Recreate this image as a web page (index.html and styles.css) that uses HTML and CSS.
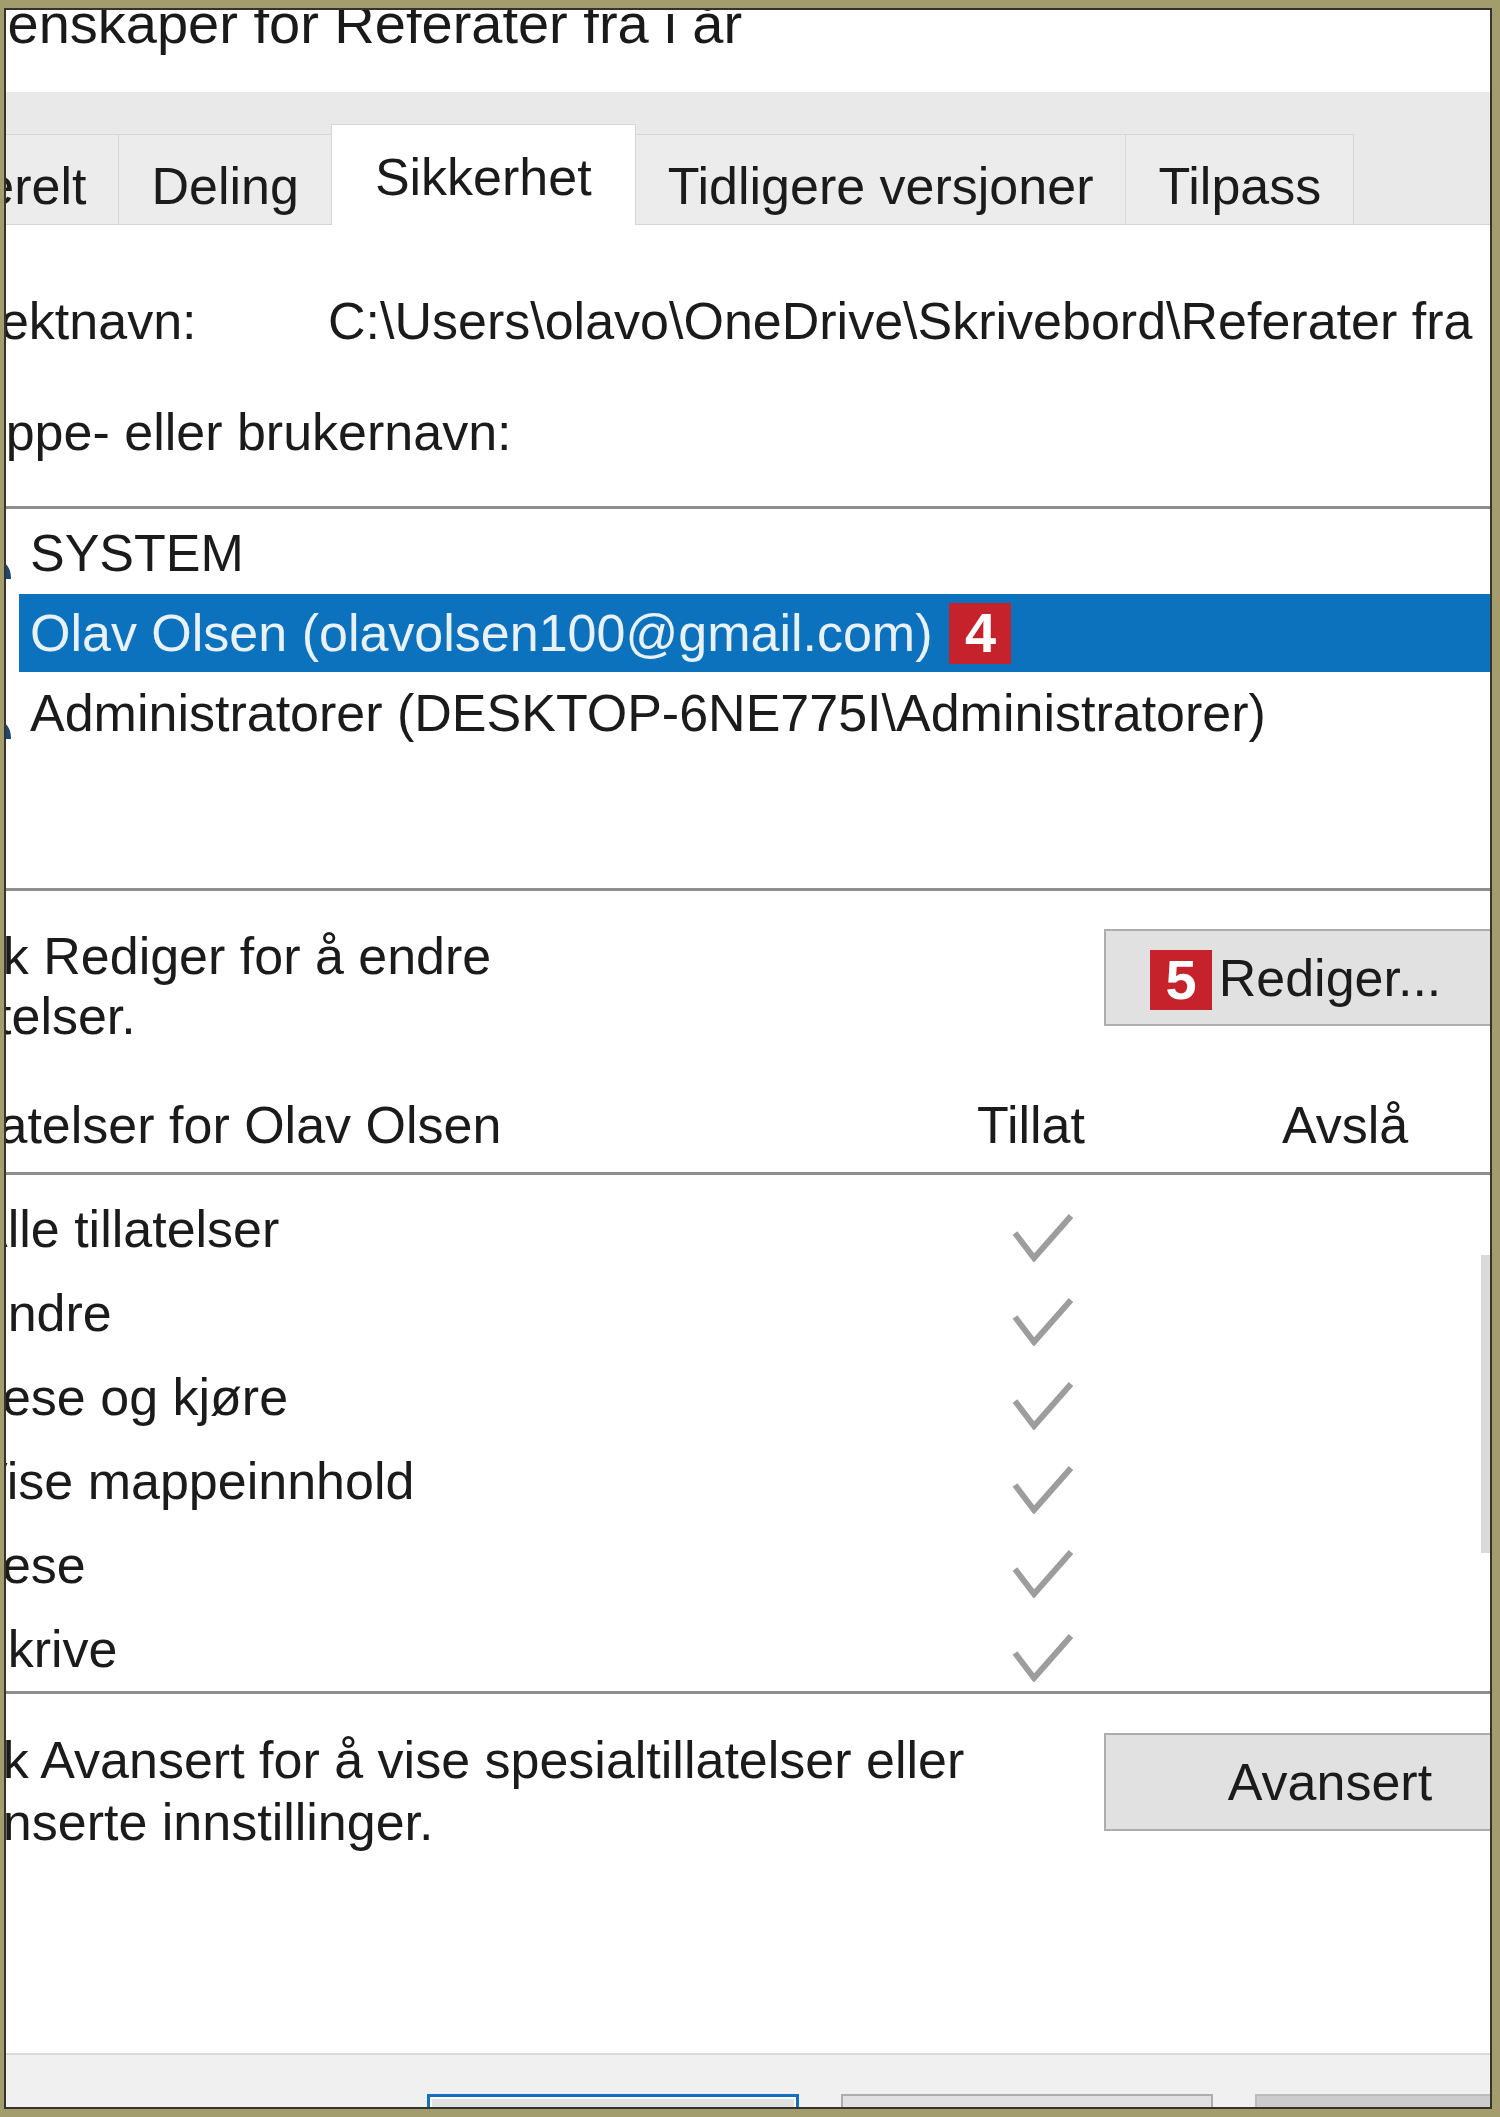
FILE: index.html
```html
<!DOCTYPE html>
<html lang="no">
<head>
<meta charset="utf-8">
<title>Egenskaper for Referater fra i år</title>
<link rel="stylesheet" href="styles.css">
</head>
<body>
<div class="frame">
  <div class="dialog">
    <div class="titlebar"><span class="title">Egenskaper for Referater fra i år</span></div>
    <div class="tabband">
      <div class="tab">Generelt</div>
      <div class="tab">Deling</div>
      <div class="tab active">Sikkerhet</div>
      <div class="tab">Tidligere versjoner</div>
      <div class="tab">Tilpass</div>
    </div>
    <div class="body">
      <div class="objrow"><span class="objlabel">Objektnavn:</span><span class="objpath">C:\Users\olavo\OneDrive\Skrivebord\Referater fra i år</span></div>
      <div class="grouplabel">Gruppe- eller brukernavn:</div>
      <div class="listbox">
        <div class="lrow">
          <svg class="uicon" viewBox="0 0 60 60" width="60" height="60"><circle cx="22" cy="18" r="11" fill="#5b8cc4"/><path d="M4 50 C4 36 12 31 22 31 C32 31 40 36 40 50 Z" fill="#3e6fa8"/><circle cx="40" cy="24" r="10" fill="#3a6aa0"/><path d="M24 56 C24 42 32 37 41 37 C50 37 58 42 58 56 Z" fill="#1f4673"/></svg>
          <span class="lname">SYSTEM</span>
        </div>
        <div class="lrow sel">
          <svg class="uicon" viewBox="0 0 60 60" width="60" height="60"><circle cx="30" cy="20" r="12" fill="#5b8cc4"/><path d="M12 54 C12 39 20 34 30 34 C40 34 48 39 48 54 Z" fill="#3e6fa8"/></svg>
          <span class="lname">Olav Olsen (olavolsen100@gmail.com)<span class="badge">4</span></span>
        </div>
        <div class="lrow">
          <svg class="uicon" viewBox="0 0 60 60" width="60" height="60"><circle cx="22" cy="18" r="11" fill="#5b8cc4"/><path d="M4 50 C4 36 12 31 22 31 C32 31 40 36 40 50 Z" fill="#3e6fa8"/><circle cx="40" cy="24" r="10" fill="#3a6aa0"/><path d="M24 56 C24 42 32 37 41 37 C50 37 58 42 58 56 Z" fill="#1f4673"/></svg>
          <span class="lname">Administratorer (DESKTOP-6NE775I\Administratorer)</span>
        </div>
      </div>

      <div class="action edit">
        <p class="hint">Klikk Rediger for å endre<br>tillatelser.</p>
        <button class="btn btn-edit" type="button"><span class="badge badge-btn">5</span>Rediger...</button>
      </div>

      <div class="header">
        <span class="h-label">Tillatelser for Olav Olsen</span>
        <span class="h-allow">Tillat</span>
        <span class="h-deny">Avslå</span>
      </div>

      <div class="permbox">
        <div class="perms">
          <div class="prow"><span class="plabel">Alle tillatelser</span><span class="pcheck"><svg class="chk" viewBox="0 0 62 50" width="62" height="50"><path d="M3 21 L22 46 L59 4" fill="none" stroke="#9d9d9d" stroke-width="6"/></svg></span></div>
          <div class="prow"><span class="plabel">Endre</span><span class="pcheck"><svg class="chk" viewBox="0 0 62 50" width="62" height="50"><path d="M3 21 L22 46 L59 4" fill="none" stroke="#9d9d9d" stroke-width="6"/></svg></span></div>
          <div class="prow"><span class="plabel">Lese og kjøre</span><span class="pcheck"><svg class="chk" viewBox="0 0 62 50" width="62" height="50"><path d="M3 21 L22 46 L59 4" fill="none" stroke="#9d9d9d" stroke-width="6"/></svg></span></div>
          <div class="prow"><span class="plabel">Vise mappeinnhold</span><span class="pcheck"><svg class="chk" viewBox="0 0 62 50" width="62" height="50"><path d="M3 21 L22 46 L59 4" fill="none" stroke="#9d9d9d" stroke-width="6"/></svg></span></div>
          <div class="prow"><span class="plabel">Lese</span><span class="pcheck"><svg class="chk" viewBox="0 0 62 50" width="62" height="50"><path d="M3 21 L22 46 L59 4" fill="none" stroke="#9d9d9d" stroke-width="6"/></svg></span></div>
          <div class="prow"><span class="plabel">Skrive</span><span class="pcheck"><svg class="chk" viewBox="0 0 62 50" width="62" height="50"><path d="M3 21 L22 46 L59 4" fill="none" stroke="#9d9d9d" stroke-width="6"/></svg></span></div>
        </div>
        <div class="scroll"><div class="thumb"></div></div>
      </div>

      <div class="action adv">
        <p class="hint hint-adv">Klikk Avansert for å vise spesialtillatelser eller<br>avanserte innstillinger.</p>
        <button class="btn btn-adv" type="button">Avansert</button>
      </div>
    </div>

    <div class="band">
      <button class="fbtn ok" type="button">OK</button>
      <button class="fbtn" type="button">Avbryt</button>
      <button class="fbtn dis" type="button">Bruk</button>
    </div>
  </div>
</div>
</body>
</html>
```

FILE: styles.css
```css
* { box-sizing: border-box; }
html, body { margin: 0; padding: 0; }
body {
  width: 1500px;
  height: 2117px;
  overflow: hidden;
  background: #a39c6c;
  font-family: "Liberation Sans", Arial, sans-serif;
  color: #1b1b1b;
}
.frame {
  margin: 8px 8px 8px 4px;
  width: 1488px;
  height: 2101px;
  border: 2px solid #34332c;
  background: #fff;
  overflow: hidden;
}
.dialog {
  margin-left: -166px;
  width: 1760px;
}
.titlebar {
  height: 82px;
  overflow: hidden;
  padding-left: 99px;
  background: #fff;
}
.title {
  display: block;
  font-size: 56px;
  line-height: 56px;
  margin-top: -14px;
  white-space: nowrap;
  color: #1a1a1a;
}
.tabband {
  height: 133px;
  background: #e9e9e9;
  border-bottom: 1px solid #d5d5d5;
  display: flex;
  align-items: flex-end;
  padding-left: 14px;
}
.tab {
  font-size: 52px;
  line-height: 60px;
  height: 90px;
  padding: 21px 32px 0;
  background: #ececec;
  border: 1px solid #d6d6d6;
  border-bottom: none;
  white-space: nowrap;
  color: #1b1b1b;
}
.tab + .tab { margin-left: -1px; }
.tab.active {
  height: 101px;
  margin-bottom: -1px;
  padding: 22px 43px 0;
  background: #fff;
  position: relative;
}
.body {
  padding-left: 79px;
  font-size: 52px;
  line-height: 60px;
}
.objrow {
  margin-top: 66px;
  display: flex;
  white-space: nowrap;
}
.objlabel { width: 409px; flex-shrink: 0; }
.grouplabel { margin-top: 51px; white-space: nowrap; }
.listbox {
  margin-top: 44px;
  width: 1627px;
  height: 385px;
  border: 3px solid #8f8f8f;
  padding-top: 4px;
}
.lrow {
  height: 80px;
  display: flex;
  align-items: center;
  gap: 6px;
  padding-left: 31px;
}
.uicon { flex-shrink: 0; }
.lname {
  flex: 1;
  height: 78px;
  display: flex;
  align-items: center;
  padding-left: 11px;
  white-space: nowrap;
}
.lrow.sel .lname {
  background: #0c72bd;
  color: #e8f0f8;
}
.badge {
  display: inline-flex;
  align-items: center;
  justify-content: center;
  width: 62px;
  height: 61px;
  background: #c5222b;
  color: #fff;
  font-weight: bold;
  font-size: 56px;
  line-height: 1;
}
.lname .badge { margin-left: 17px; }
.action {
  display: flex;
  align-items: flex-start;
}
.action.edit { margin-top: 35px; }
.action.adv { margin-top: 35px; }
.hint {
  margin: 0;
  width: 1185px;
  flex-shrink: 0;
  white-space: nowrap;
}
.hint-adv { line-height: 62px; }
.btn {
  position: relative;
  flex-shrink: 0;
  width: 452px;
  padding: 0;
  border: 2px solid #adadad;
  background: #e1e1e1;
  font-family: inherit;
  font-size: 52px;
  color: #1b1b1b;
  text-align: center;
}
.btn-edit { margin-top: 3px; height: 97px; }
.btn-adv { margin-top: 4px; height: 98px; }
.badge-btn {
  position: absolute;
  left: 44px;
  top: 19px;
  height: 60px;
}
.header {
  margin-top: 49px;
  padding-left: 15px;
  display: flex;
  white-space: nowrap;
}
.h-label { width: 997px; flex-shrink: 0; }
.h-allow { width: 200px; text-align: center; flex-shrink: 0; }
.h-deny { width: 200px; margin-left: 114px; text-align: center; flex-shrink: 0; }
.permbox {
  margin-top: 17px;
  width: 1625px;
  border: 3px solid #8f8f8f;
  display: flex;
}
.perms {
  flex: 1;
  padding-top: 12px;
}
.prow {
  height: 84px;
  display: grid;
  grid-template-columns: 1014px 214px;
  align-items: center;
}
.plabel { padding-left: 51px; white-space: nowrap; }
.pcheck { display: flex; justify-content: center; padding-top: 16px; }
.chk { display: block; }
.scroll {
  width: 60px;
  flex-shrink: 0;
  padding-top: 80px;
}
.thumb { height: 298px; background: #dadada; }
.band {
  margin-top: 200px;
  height: 200px;
  background: #f0f0f0;
  border-top: 2px solid #dadada;
  padding: 39px 0 0 587px;
  display: flex;
  gap: 42px;
}
.fbtn {
  width: 372px;
  height: 98px;
  flex-shrink: 0;
  border: 2px solid #adadad;
  background: #e1e1e1;
  font-family: inherit;
  font-size: 52px;
  color: #1b1b1b;
}
.fbtn.ok {
  border: 3px solid #1371c3;
  box-shadow: inset 0 0 0 2px #fff;
}
.fbtn.dis {
  border-color: #bdbdbd;
  background: #cccccc;
  color: #8a8a8a;
}
```
